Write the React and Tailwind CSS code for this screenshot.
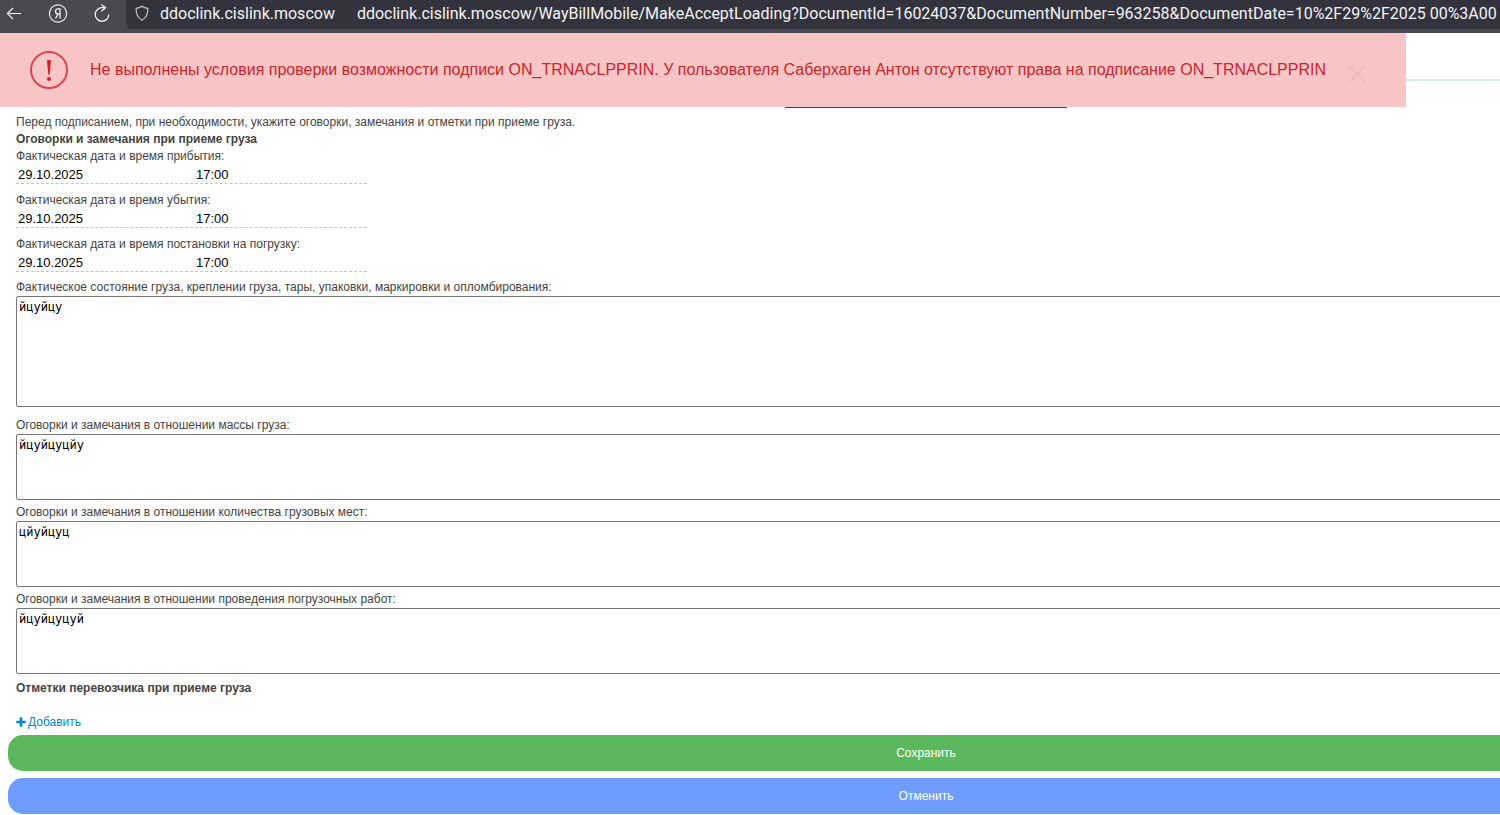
import { useState } from "react";

const dateFields = [
  { id: "arrival", label: "Фактическая дата и время прибытия:" },
  { id: "departure", label: "Фактическая дата и время убытия:" },
  { id: "loading", label: "Фактическая дата и время постановки на погрузку:" }
];

const noteFields = [
  { id: "mass", label: "Оговорки и замечания в отношении массы груза:" },
  { id: "places", label: "Оговорки и замечания в отношении количества грузовых мест:" },
  { id: "works", label: "Оговорки и замечания в отношении проведения погрузочных работ:" }
];

function BrowserBar() {
  return (
    <header className="h-[33px] flex items-start bg-[#494953] text-[#f2f2f4] overflow-hidden">
      <nav className="w-[126px] shrink-0 h-[27px] flex items-center gap-6 pl-1">
        <button type="button" aria-label="Назад">
          <svg width="20" height="20" viewBox="0 0 20 20" fill="none" stroke="currentColor" strokeWidth="1.2">
            <path d="M17 9.500H3.500M9 4L3.400 9.500 9 15" />
          </svg>
        </button>
        <button type="button" aria-label="Яндекс">
          <svg width="20" height="20" viewBox="0 0 20 20" fill="none" stroke="currentColor" strokeWidth="1.1">
            <circle cx="10" cy="9.500" r="8.600" />
            <path d="M12 14.500V4.800H10c-3.300 0-3.300 5.100 0 5.100h2M10 9.900L7.500 14.500" strokeWidth="1.300" />
          </svg>
        </button>
        <button type="button" aria-label="Обновить">
          <svg width="20" height="20" viewBox="0 0 20 20" fill="none" stroke="currentColor" strokeWidth="1.3">
            <path d="M16.800 10.500a6.800 6.800 0 1 1-6.800-6.800h3.300M9.300 0.500L13.500 3.700 9.300 7.200" />
          </svg>
        </button>
      </nav>
      <div className="flex-1 min-w-0 h-[29px] flex items-center pb-[3px] pl-2 rounded-bl-md bg-[#33333d] font-[Roboto,sans-serif] text-[16px] whitespace-nowrap">
        <svg className="shrink-0" width="16" height="18" viewBox="0 0 16 18" fill="none" stroke="#c4c4ca" strokeWidth="1.2">
          <path d="M8 2.300c1.600 1.200 3.400 1.900 5.800 2.100.3 5.300-1.400 9.300-5.800 11.900C3.600 13.700 1.900 9.700 2.200 4.400 4.600 4.200 6.400 3.500 8 2.300z" />
        </svg>
        <span className="ml-[10px]">ddoclink.cislink.moscow</span>
        <span className="ml-[22px]">
          ddoclink.cislink.moscow/WayBillMobile/MakeAcceptLoading?DocumentId=16024037&amp;DocumentNumber=963258&amp;DocumentDate=10%2F29%2F2025 00%3A00
        </span>
      </div>
    </header>
  );
}

function Alert({ onClose }) {
  return (
    <div role="alert" className="absolute top-0 left-0 w-[1406px] h-[74px] flex items-center pl-[29px] bg-[#f7c5c5] text-[#c9252b]">
      <svg className="shrink-0" width="40" height="40" viewBox="0 0 40 40" fill="none">
        <circle cx="20" cy="20" r="18" stroke="#d9474b" strokeWidth="2" />
        <path d="M18 10h4l-1.300 14.800h-1.400z" fill="#c9252b" />
        <circle cx="20" cy="29" r="2" fill="#c9252b" />
      </svg>
      <p className="ml-[21px] text-[16px] leading-5 whitespace-nowrap">
        Не выполнены условия проверки возможности подписи ON_TRNACLPPRIN. У пользователя Саберхаген Антон отсутствуют права на подписание ON_TRNACLPPRIN
      </p>
      <button type="button" aria-label="Закрыть" onClick={onClose} className="ml-auto mr-10 mt-2">
        <svg width="18" height="18" viewBox="0 0 18 18" stroke="#e3b9b9" strokeWidth="1.5">
          <path d="M1 1l16 16M17 1L1 17" />
        </svg>
      </button>
    </div>
  );
}

export default function App() {
  const [alertOpen, setAlertOpen] = useState(true);
  const [state, setState] = useState("йцуйцу");
  const [dates, setDates] = useState({
    arrival: { date: "29.10.2025", time: "17:00" },
    departure: { date: "29.10.2025", time: "17:00" },
    loading: { date: "29.10.2025", time: "17:00" }
  });
  const [notes, setNotes] = useState({
    mass: "йцуйцуцйу",
    places: "цйуйцуц",
    works: "йцуйцуцуй"
  });

  const changeDate = (id, key, value) =>
    setDates((prev) => ({ ...prev, [id]: { ...prev[id], [key]: value } }));

  const inputClass = "block h-[18px] px-[2px] bg-transparent text-[13px] text-black outline-none";
  const areaClass =
    "block w-full px-[2px] py-[2px] border border-[#767676] rounded-xs resize-none bg-white text-black text-[12px] leading-4 font-['DejaVu_Sans_Mono',monospace] outline-none";

  return (
    <div className="overflow-hidden bg-white font-['Liberation_Sans',Arial,sans-serif] text-[12px] leading-[17px] text-[#444444]">
      <BrowserBar />
      <div className="relative min-w-[1852px]">
        {/* Page header */}
        <div className="h-12 border-b-2 border-[#cde9fb]"></div>
        <div className="w-[282px] h-[27px] mx-auto border-b border-[#444444]"></div>
        {alertOpen && <Alert onClose={() => setAlertOpen(false)} />}

        <form className="px-2 pt-[6px] pb-px" onSubmit={(event) => event.preventDefault()}>
          <div className="px-2">
            <p>Перед подписанием, при необходимости, укажите оговорки, замечания и отметки при приеме груза.</p>
            <h2 className="font-bold">Оговорки и замечания при приеме груза</h2>

            <div className="flex flex-col gap-2">
              {dateFields.map((field) => (
                <div key={field.id}>
                  <label className="block" htmlFor={field.id}>{field.label}</label>
                  <div className="flex w-[351px] border-b border-dashed border-[#c4c4c4]">
                    <input
                      id={field.id}
                      className={`${inputClass} w-[178px]`}
                      value={dates[field.id].date}
                      onChange={(event) => changeDate(field.id, "date", event.target.value)}
                    />
                    <input
                      aria-label={field.label}
                      className={`${inputClass} flex-1 min-w-0`}
                      value={dates[field.id].time}
                      onChange={(event) => changeDate(field.id, "time", event.target.value)}
                    />
                  </div>
                </div>
              ))}
            </div>

            <div className="mt-[7px] mb-[10px]">
              <label className="block" htmlFor="state">
                Фактическое состояние груза, креплении груза, тары, упаковки, маркировки и опломбирования:
              </label>
              <textarea
                id="state"
                className={`${areaClass} h-[111px]`}
                value={state}
                onChange={(event) => setState(event.target.value)}
              />
            </div>

            <div className="flex flex-col gap-1">
              {noteFields.map((field) => (
                <div key={field.id}>
                  <label className="block" htmlFor={field.id}>{field.label}</label>
                  <textarea
                    id={field.id}
                    className={`${areaClass} h-[66px]`}
                    value={notes[field.id]}
                    onChange={(event) => setNotes((prev) => ({ ...prev, [field.id]: event.target.value }))}
                  />
                </div>
              ))}
            </div>

            <h2 className="mt-[6px] font-bold">Отметки перевозчика при приеме груза</h2>
            <a href="#add" className="mt-[17px] flex items-center gap-[2px] w-fit text-[#0088cc]">
              <svg width="10" height="12" viewBox="0 0 10 12" stroke="currentColor" strokeWidth="2.6">
                <path d="M5 0.300v9.400M0.300 5h9.400" />
              </svg>
              Добавить
            </a>
          </div>

          <div className="mt-1 flex flex-col gap-[7px] text-white">
            <button type="submit" className="h-9 rounded-[15px] bg-[#5cb85c]">Сохранить</button>
            <button type="button" className="h-9 rounded-[15px] bg-[#6e9cff]">Отменить</button>
          </div>
        </form>
      </div>
    </div>
  );
}
